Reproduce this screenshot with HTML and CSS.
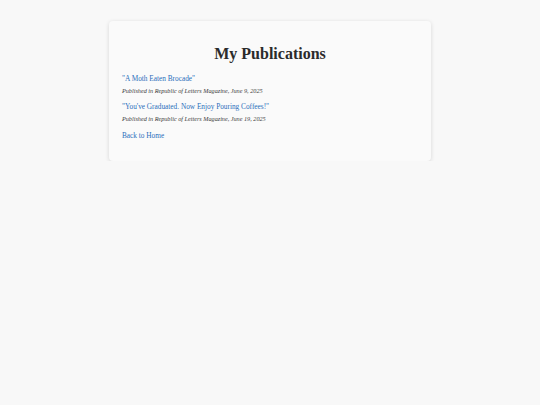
FILE: index.html
```html
<!DOCTYPE html>
<html>
<head>
<meta charset="utf-8">
<link rel="stylesheet" href="styles.css">
</head>
<body>
<main class="card">
  <h1 class="title">My Publications</h1>
  <ul class="pubs">
    <li class="pub">
      <a class="pub-link" href="#">"A Moth Eaten Brocade"</a>
      <p class="pub-meta">Published in Republic of Letters Magazine, June 9, 2025</p>
    </li>
    <li class="pub">
      <a class="pub-link" href="#">"You've Graduated. Now Enjoy Pouring Coffees!"</a>
      <p class="pub-meta">Published in Republic of Letters Magazine, June 19, 2025</p>
    </li>
  </ul>
  <a class="back" href="#">Back to Home</a>
</main>
</body>
</html>
```
FILE: styles.css
```css
html, body {
  margin: 0;
  padding: 0;
  background: #f8f8f8;
}
body {
  font-family: "Liberation Serif", "Times New Roman", serif;
  color: #333;
  padding-top: 21px;
}
.card {
  box-sizing: border-box;
  width: 322px;
  margin: 0 auto;
  background: #fafafa;
  border-radius: 4px;
  box-shadow: 0 1px 4px rgba(0,0,0,0.14);
  padding: 23px 13px 20px;
  display: flex;
  flex-direction: column;
}
.title {
  margin: 0 0 10px;
  text-align: center;
  font-size: 16px;
  line-height: 20px;
  font-weight: bold;
  color: #2b2b2b;
}
.pubs {
  list-style: none;
  margin: 0;
  padding: 0;
  display: flex;
  flex-direction: column;
  gap: 7px;
}
.pub {
  display: flex;
  flex-direction: column;
  gap: 3px;
}
.pub-link, .back {
  color: #2a6ebb;
  text-decoration: none;
  font-size: 7.3px;
  line-height: 10px;
}
.pub-meta {
  margin: 0;
  font-style: italic;
  font-size: 6.2px;
  line-height: 8px;
  color: #3a3a3a;
}
.back {
  margin-top: 8px;
  align-self: flex-start;
}
```
